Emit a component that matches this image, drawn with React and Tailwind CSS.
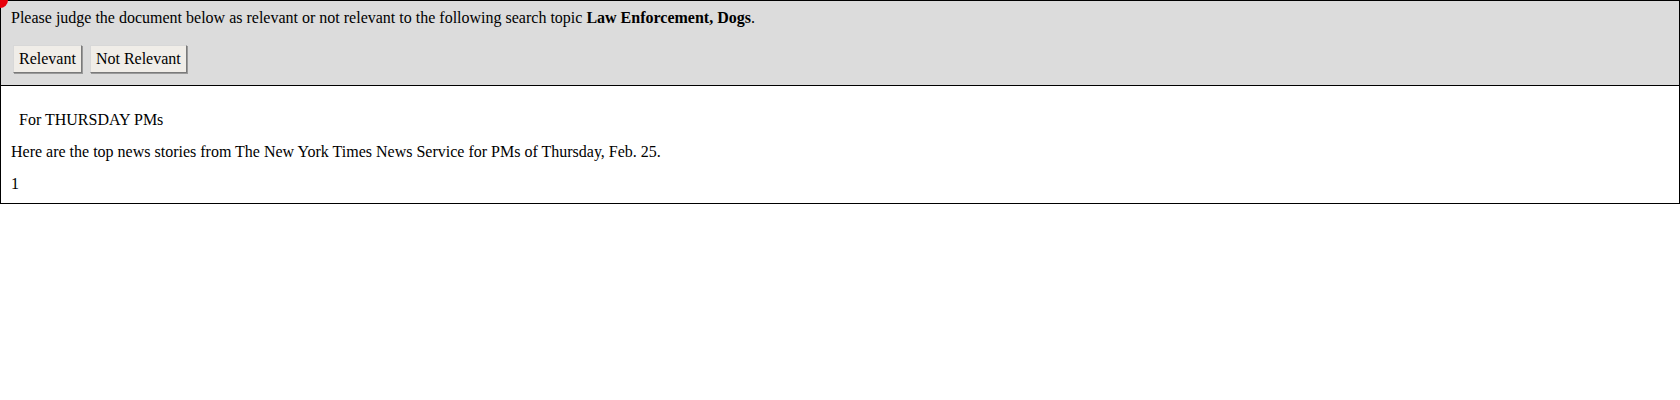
export default function App() {
  return (
    <div className="relative w-[1680px] bg-white font-['Liberation_Serif',serif] text-[16px] text-black">
      <span className="absolute -left-2 -top-2 h-4 w-4 rounded-full bg-red-600" />
      <div className="border border-black">
        <div className="border-b border-black bg-[#dcdcdc] px-[10px] pb-3 pt-[7px]">
          <p className="leading-[20px]">
            Please judge the document below as relevant or not relevant to the following search topic{" "}
            <b>Law Enforcement, Dogs</b>.
          </p>
          <div className="mt-[17px] flex gap-2 pl-[2px]">
            <button className="h-[28px] border border-t-[#d8d8d8] border-l-[#d8d8d8] border-r-[#7a7a7a] border-b-[#7a7a7a] bg-[#f0ede8] px-[5px] shadow-[1px_1px_0_#9a9a9a]">
              Relevant
            </button>
            <button className="h-[28px] border border-t-[#d8d8d8] border-l-[#d8d8d8] border-r-[#7a7a7a] border-b-[#7a7a7a] bg-[#f0ede8] px-[5px] shadow-[1px_1px_0_#9a9a9a]">
              Not Relevant
            </button>
          </div>
        </div>
        <div className="px-[10px] pb-[9px] pt-[24px]">
          <p className="pl-[8px] leading-[20px]">For THURSDAY PMs</p>
          <p className="mt-[12px] leading-[20px]">
            Here are the top news stories from The New York Times News Service for PMs of Thursday, Feb. 25.
          </p>
          <p className="mt-[12px] leading-[20px]">1</p>
        </div>
      </div>
    </div>
  );
}
